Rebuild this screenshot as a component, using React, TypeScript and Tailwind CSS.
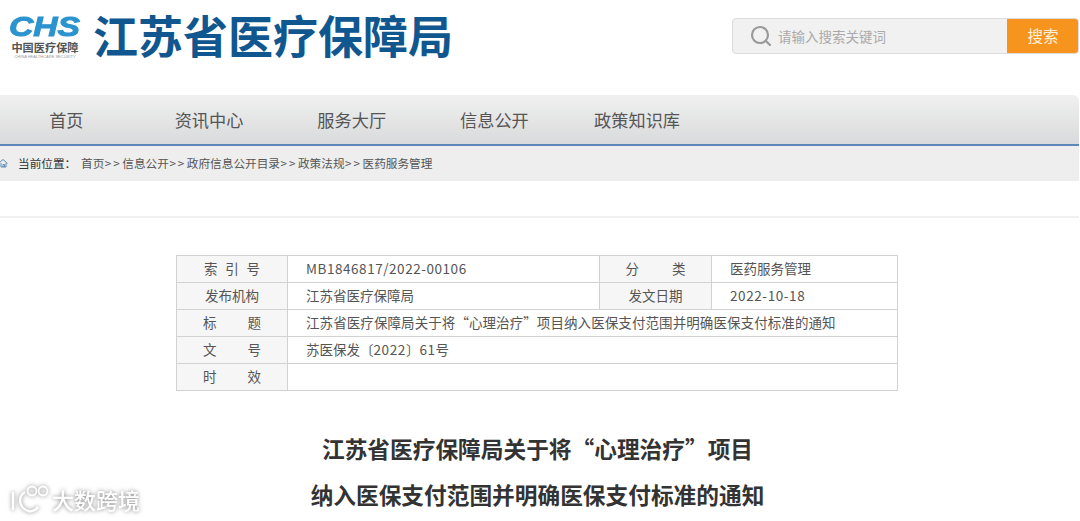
import { Search } from 'lucide-react'

const cjk = "font-['Noto_Sans_CJK_SC','Noto_Sans',sans-serif]"

const navItems = ['首页', '资讯中心', '服务大厅', '信息公开', '政策知识库']
const crumbs = ['首页', '信息公开', '政府信息公开目录', '政策法规', '医药服务管理']

function Logo() {
  return (
    <div className="flex w-[68px] flex-col items-center">
      <div className="mt-[1px] h-[22px] origin-center scale-x-[1.2] font-['Liberation_Sans',sans-serif] text-[28px] leading-[22px] font-bold text-[#2b93cf] italic [-webkit-text-stroke:1px_#2b93cf]">
        CHS
      </div>
      <div className="mt-[3px] text-[11.2px] leading-[13px] font-bold whitespace-nowrap text-[#555]">中国医疗保障</div>
      <div className="h-[5px] font-['Liberation_Sans',sans-serif] text-[4px] leading-[5px] whitespace-nowrap text-[#999]">
        CHINA HEALTHCARE SECURITY
      </div>
    </div>
  )
}

function Label({ chars, className }: { chars: string[]; className: string }) {
  return (
    <div className={`mx-auto flex justify-between ${className}`}>
      {chars.map((c) => (
        <span key={c}>{c}</span>
      ))}
    </div>
  )
}

function LabelCell({ children }: { children: React.ReactNode }) {
  return <td className="border border-[#d2d2d2] bg-[#f6f6f6] p-0 pb-[2px] text-center text-[#555]">{children}</td>
}

function ValueCell({ children, span }: { children?: React.ReactNode; span?: number }) {
  return (
    <td colSpan={span} className="border border-[#d2d2d2] p-0 pb-[2px] pl-[18px] text-left whitespace-nowrap text-[#555]">
      {children}
    </td>
  )
}

export default function App() {
  return (
    <div className={`h-[521px] w-[1080px] overflow-hidden bg-white ${cjk} relative`}>
      <header className="flex h-[95px] items-start">
        <div className="mt-[15px] ml-[11px]">
          <Logo />
        </div>
        <h1 className="mt-[2px] ml-[14px] text-[45px] leading-[66px] font-bold whitespace-nowrap text-[#11578f]">
          江苏省医疗保障局
        </h1>
        <div className="mt-[18px] mr-[1px] ml-auto flex h-[36px] w-[347px] overflow-hidden rounded-[4px] border border-[#dcdcdc] bg-[#f1f1f1]">
          <div className="flex flex-1 items-center pl-[16px]">
            <Search size={24} strokeWidth={2.2} className="text-[#999]" />
            <span className="ml-[5px] text-[13.5px] text-[#aaa]">请输入搜索关键词</span>
          </div>
          <div className="-my-px -mr-px flex w-[72px] items-center justify-center bg-[#f7941d] text-[15.5px] text-[#fdf0dc]">
            搜索
          </div>
        </div>
      </header>

      <nav className="flex h-[49px] w-[1079px] items-center rounded-tr-[6px] bg-gradient-to-b from-[#f0f0f0] to-[#d9dadb]">
        <div className="-ml-[5px] flex">
          {navItems.map((item) => (
            <div key={item} className="w-[142.7px] text-center text-[17.2px] whitespace-nowrap text-[#555]">
              {item}
            </div>
          ))}
        </div>
      </nav>
      <div className="h-[2px] w-[1079px] bg-[#5b88b8]" />

      <div className="flex h-[35px] w-[1079px] items-center bg-[#eeeeee] pb-[2px] text-[11.65px] text-[#444]">
        <svg width="8" height="10" viewBox="0 0 8 10" className="shrink-0" fill="none" stroke="#5a8cb5" strokeWidth="1">
          <path d="M-1 5 L3 1.5 L7.5 5.5 M1 5 V9 H6 V5 M3 9 V6.5 H4.5 V9" />
        </svg>
        <span className="ml-[10px] w-[63px] whitespace-nowrap text-[#333]">当前位置：</span>
        <div className="flex whitespace-nowrap text-[#555]">
          {crumbs.map((c, i) => (
            <span key={c} className="flex">
              {i > 0 && <span className="w-[18px] text-center tracking-[2px]">&gt;&gt;</span>}
              {c}
            </span>
          ))}
        </div>
      </div>

      <div className="mt-[35px] h-[2px] w-[1079px] bg-[#f0f0f0]" />

      <main className="flex flex-col items-center pt-[37px] pr-[5px]">
        <table className="mr-[1px] w-[721px] table-fixed border-collapse text-[13.5px]">
          <colgroup>
            <col className="w-[111px]" />
            <col className="w-[312px]" />
            <col className="w-[112px]" />
            <col className="w-[186px]" />
          </colgroup>
          <tbody className="[&_tr]:h-[27px]">
            <tr>
              <LabelCell>
                <Label chars={['索', '引', '号']} className="w-[56px]" />
              </LabelCell>
              <ValueCell>
                <span className="tracking-[0.55px]">MB1846817/2022-00106</span>
              </ValueCell>
              <LabelCell>
                <Label chars={['分', '类']} className="w-[60px]" />
              </LabelCell>
              <ValueCell>医药服务管理</ValueCell>
            </tr>
            <tr>
              <LabelCell>发布机构</LabelCell>
              <ValueCell>江苏省医疗保障局</ValueCell>
              <LabelCell>发文日期</LabelCell>
              <ValueCell>
                <span className="tracking-[0.6px]">2022-10-18</span>
              </ValueCell>
            </tr>
            <tr>
              <LabelCell>
                <Label chars={['标', '题']} className="w-[58px]" />
              </LabelCell>
              <ValueCell span={3}>
                <span className="tracking-[0.08px]">江苏省医疗保障局关于将“心理治疗”项目纳入医保支付范围并明确医保支付标准的通知</span>
              </ValueCell>
            </tr>
            <tr>
              <LabelCell>
                <Label chars={['文', '号']} className="w-[58px]" />
              </LabelCell>
              <ValueCell span={3}>
                苏医保发〔<span className="tracking-[0.6px]">2022</span>〕<span className="tracking-[0.6px]">61</span>号
              </ValueCell>
            </tr>
            <tr>
              <LabelCell>
                <Label chars={['时', '效']} className="w-[58px]" />
              </LabelCell>
              <ValueCell span={3} />
            </tr>
          </tbody>
        </table>

        <h2 className="mt-[35px] text-center text-[22.7px] leading-[46px] font-bold text-[#333]">
          江苏省医疗保障局关于将“心理治疗”项目
          <br />
          纳入医保支付范围并明确医保支付标准的通知
        </h2>
      </main>

      <div className="absolute bottom-[8px] left-[10px] flex items-center [filter:drop-shadow(0_0_2px_rgba(0,0,0,0.5))]">
        <svg width="41" height="28" viewBox="0 0 41 28" fill="none" stroke="white" strokeWidth="2.4">
          <path d="M3 7 V25" />
          <path d="M15 7 C8 11 8 22 18 26 C22 27 26 25 28 22" />
          <circle cx="22" cy="6" r="4.5" strokeWidth="1.8" />
          <circle cx="33" cy="6" r="4.5" strokeWidth="1.8" />
        </svg>
        <span className="ml-[1px] text-[22px] leading-[26px] font-medium text-white">大数跨境</span>
      </div>
    </div>
  )
}
